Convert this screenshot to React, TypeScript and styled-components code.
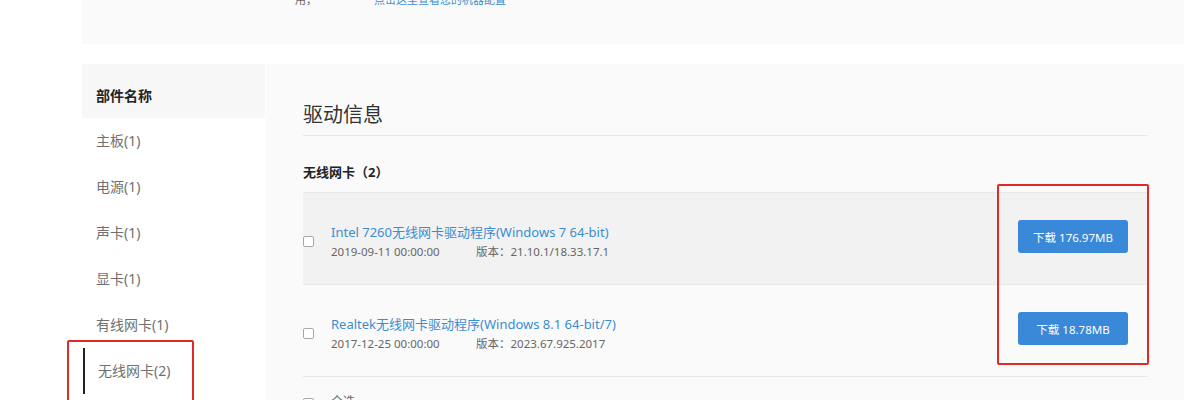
import React from 'react'
import styled, { createGlobalStyle } from 'styled-components'

const GlobalStyle = createGlobalStyle`
  html, body {
    margin: 0;
    padding: 0;
    background: #fff;
  }
  body {
    font-family: "Noto Sans", "Noto Sans CJK SC", sans-serif;
    color: #333;
    overflow: hidden;
  }
`

const Page = styled.div`
  position: relative;
  width: 1186px;
  height: 400px;
  overflow: hidden;
  padding: 0 2px 0 82px;
  box-sizing: border-box;
`

const Notice = styled.div`
  height: 44px;
  background: #fafafa;
  overflow: hidden;
  margin-bottom: 20px;
`

const NoticeLine = styled.div`
  margin-top: -10px;
  padding-left: 213px;
  display: flex;
  gap: 57px;
  font-size: 11px;
  line-height: 20px;
  color: #666;

  & a {
    color: #3c8dd0;
    text-decoration: none;
  }
`

const Body = styled.div`
  display: flex;
  gap: 1px;
  align-items: flex-start;
`

const Sidebar = styled.div`
  width: 183px;
  flex-shrink: 0;
  background: #fff;
`

const SideHead = styled.div`
  height: 44px;
  line-height: 44px;
  padding: 10px 0 0 14px;
  background: #f7f7f7;
  font-size: 14px;
  font-weight: 700;
  color: #222;
`

const SideItem = styled.div<{ $active?: boolean }>`
  height: 46px;
  line-height: 46px;
  font-size: 14px;
  color: #707070;
  padding-left: ${p => (p.$active ? '13px' : '14px')};
  margin-left: ${p => (p.$active ? '1px' : '0')};
  border-left: ${p => (p.$active ? '2px solid #222' : 'none')};
`

const Main = styled.div`
  flex: 1;
  min-height: 400px;
  background: #fafafa;
  padding: 0 36px 0 37px;
`

const Title = styled.div`
  padding: 37px 0 6px;
  line-height: 28px;
  font-size: 20px;
  color: #333;
  border-bottom: 1px solid #e8e8e8;
`

const Category = styled.div`
  margin: 26px 0 10px;
  line-height: 20px;
  font-size: 13px;
  font-weight: 700;
  color: #222;
`

const List = styled.div`
  border-top: 1px solid #e8e8e8;
`

const Row = styled.div<{ $hover?: boolean }>`
  display: flex;
  align-items: center;
  height: 91px;
  border-bottom: 1px solid #e8e8e8;
  background: ${p => (p.$hover ? '#f2f2f2' : '#fafafa')};
`

const Check = styled.span`
  width: 9px;
  height: 9px;
  border: 1px solid #a8a8a8;
  border-radius: 2px;
  background: #fff;
  flex-shrink: 0;
  margin-top: 5px;
`

const Info = styled.div`
  flex: 1;
  margin-left: 17px;
  padding-top: 6px;
`

const DriverName = styled.a`
  display: block;
  font-size: 13px;
  line-height: 19px;
  color: #3c8dd0;
  text-decoration: none;
`

const Meta = styled.div`
  font-size: 11.5px;
  line-height: 19px;
  color: #666;

  & span:first-child {
    display: inline-block;
    width: 145px;
  }
`

const DownloadButton = styled.button`
  width: 110px;
  height: 33px;
  margin-right: 20px;
  margin-top: -4px;
  border: none;
  border-radius: 3px;
  background: #3a88d8;
  color: #fff;
  font-family: inherit;
  font-size: 11.5px;
  cursor: pointer;
`

const Footer = styled.div`
  display: flex;
  align-items: center;
  padding-top: 15px;
  font-size: 12px;
  color: #666;
  gap: 17px;
`

const Mark = styled.div<{ $l: number; $t: number; $w: number; $h: number }>`
  position: absolute;
  left: ${p => p.$l}px;
  top: ${p => p.$t}px;
  width: ${p => p.$w}px;
  height: ${p => p.$h}px;
  border: 2px solid #e12a26;
  border-radius: 2px;
  box-sizing: border-box;
  pointer-events: none;
`

const parts = ['主板(1)', '电源(1)', '声卡(1)', '显卡(1)', '有线网卡(1)', '无线网卡(2)', '蓝牙(1)']

const drivers = [
  {
    name: 'Intel 7260无线网卡驱动程序(Windows 7 64-bit)',
    date: '2019-09-11 00:00:00',
    version: '21.10.1/18.33.17.1',
    size: '176.97MB',
  },
  {
    name: 'Realtek无线网卡驱动程序(Windows 8.1 64-bit/7)',
    date: '2017-12-25 00:00:00',
    version: '2023.67.925.2017',
    size: '18.78MB',
  },
]

export default function App() {
  return (
    <Page>
      <GlobalStyle />
      <Notice>
        <NoticeLine>
          <span>{'用，'}</span>
          <a href="#">{'点击这里查看您的机器配置'}</a>
        </NoticeLine>
      </Notice>
      <Body>
        <Sidebar>
          <SideHead>{'部件名称'}</SideHead>
          {parts.map(p => (
            <SideItem key={p} $active={p === '无线网卡(2)'}>
              {p}
            </SideItem>
          ))}
        </Sidebar>
        <Main>
          <Title>{'驱动信息'}</Title>
          <Category>{'无线网卡（2）'}</Category>
          <List>
            {drivers.map((d, i) => (
              <Row key={d.name} $hover={i === 0}>
                <Check />
                <Info>
                  <DriverName href="#">{d.name}</DriverName>
                  <Meta>
                    <span>{d.date}</span>
                    <span>{'版本：' + d.version}</span>
                  </Meta>
                </Info>
                <DownloadButton>{'下载 ' + d.size}</DownloadButton>
              </Row>
            ))}
          </List>
          <Footer>
            <Check />
            <span>{'全选'}</span>
          </Footer>
        </Main>
      </Body>
      <Mark $l={67} $t={340} $w={127} $h={70} />
      <Mark $l={997} $t={184} $w={152} $h={181} />
    </Page>
  )
}
